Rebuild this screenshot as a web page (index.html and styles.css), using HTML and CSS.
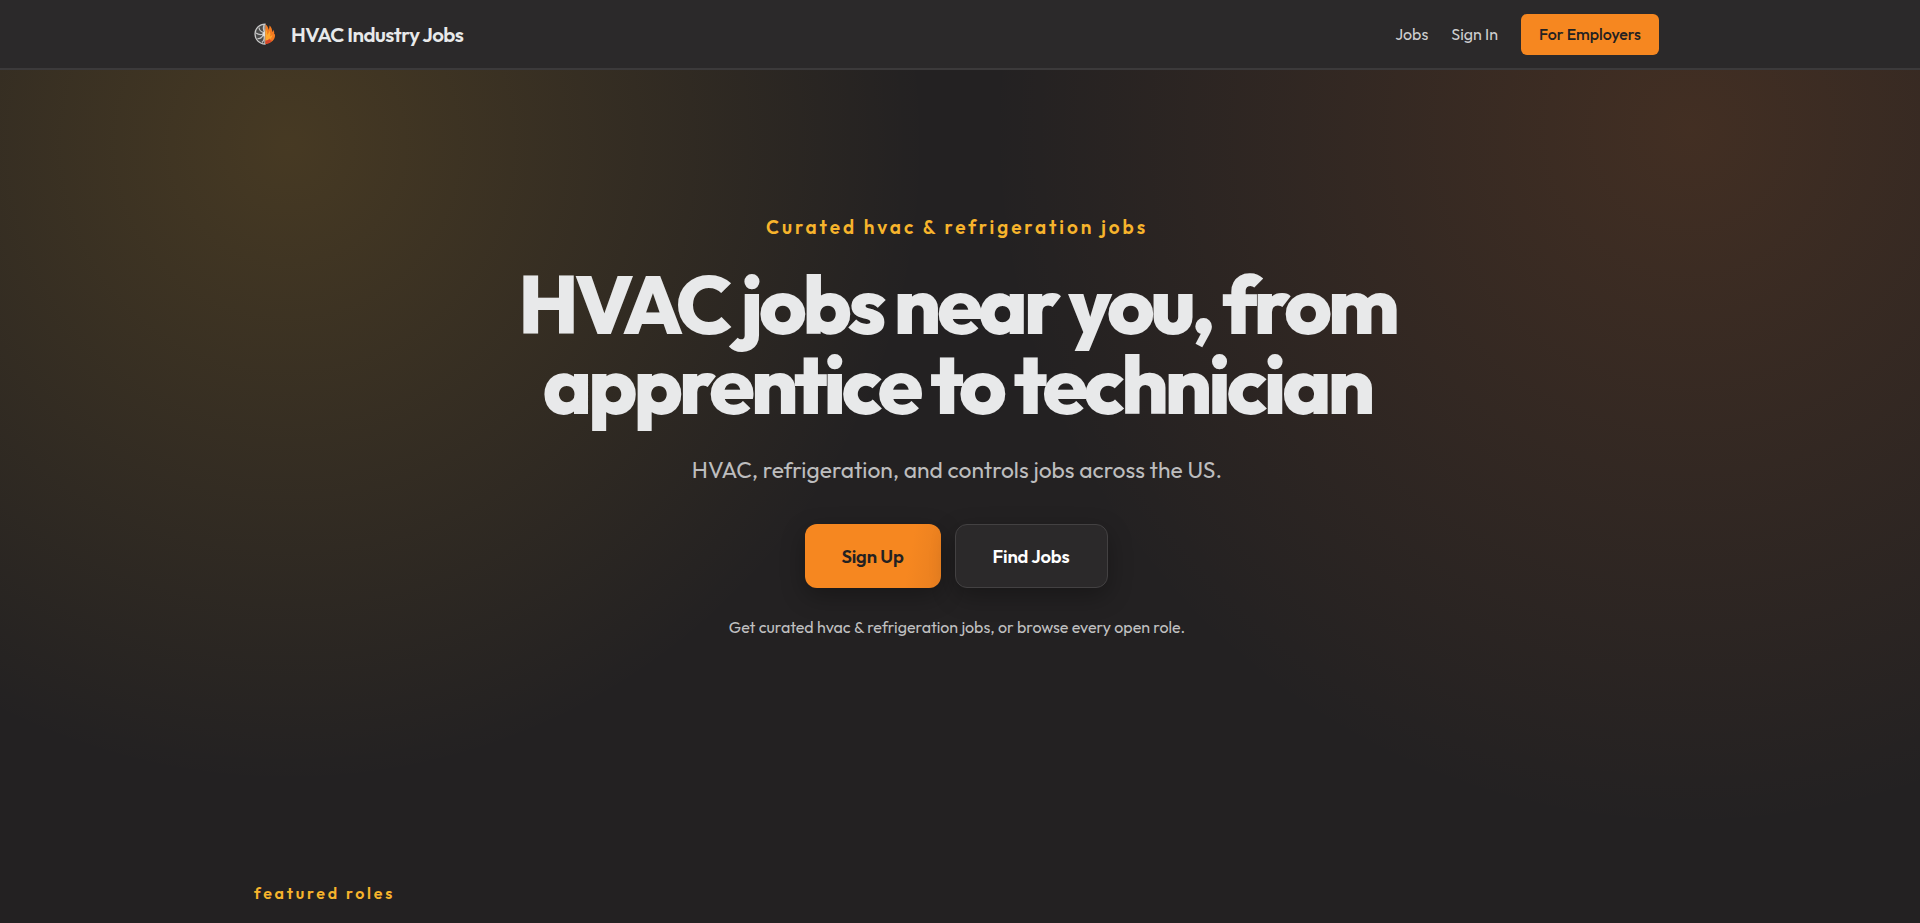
FILE: index.html
```html
<!DOCTYPE html>
<html lang="en">
<head>
    <meta charset="UTF-8">
    <meta name="viewport" content="width=device-width, initial-scale=1.0">
    <title>HVAC Industry Jobs</title>
    <link rel="stylesheet" href="styles.css">
</head>
<body>

<header class="site-header">
    <div class="container header-inner">
        <a class="brand" href="#">
            <svg class="brand-icon" viewBox="0 0 44 44">
                <path d="M22 2a20 20 0 0 0 0 40z" fill="#4a4a4a" stroke="#c9c9c9" stroke-width="2.5"/>
                <path d="M21 18Q17 11 20 4M19 19Q11 17 10 9M18 22Q11 25 4 20M18 24Q15 32 7 31M20 26Q22 33 16 39" fill="none" stroke="#c4c4c4" stroke-width="2.4"/>
                <path d="M22 17a5 5 0 0 0 0 10z" fill="#ddd"/>
                <path d="M23 42V3q6 4 6 11 2-3 2-9 6 5 5 13 2-1 2-5 4 5 2 10 2-1 2-3 1 11-5 16-5 5-14 6z" fill="#f47b20"/>
                <path d="M23 36V11q4 6 3 13 4-3 5-9 3 7 1 12 3-1 5-4-1 10-14 13z" fill="#ffa82e"/>
                <path d="M23 42v-7q5 1 8-4 0 5 5 4-3 5-13 7z" fill="#d8432a"/>
            </svg>
            <span class="brand-name">HVAC Industry Jobs</span>
        </a>
        <nav class="nav">
            <a class="nav-link" href="#">Jobs</a>
            <a class="nav-link nav-signin" href="#">Sign In</a>
            <a class="nav-button" href="#">For Employers</a>
        </nav>
    </div>
</header>

<main>
    <section class="hero">
        <p class="eyebrow hero-eyebrow">Curated hvac &amp; refrigeration jobs</p>
        <h1 class="hero-title">HVAC jobs near you, from apprentice to technician</h1>
        <p class="hero-text">HVAC, refrigeration, and controls jobs across the US.</p>
        <div class="hero-actions">
            <a class="button button-primary" href="#">Sign Up</a>
            <a class="button button-secondary" href="#">Find Jobs</a>
        </div>
        <p class="hero-note">Get curated hvac &amp; refrigeration jobs, or browse every open role.</p>
    </section>

    <section class="container featured">
        <p class="eyebrow featured-eyebrow">featured roles</p>
    </section>
</main>

</body>
</html>
```

FILE: styles.css
```css
* {
    box-sizing: border-box;
}
body {
    margin: 0;
    height: 923px;
    overflow: hidden;
    background:
        radial-gradient(circle at 15% 145px, rgba(245, 178, 40, 0.17), transparent 640px),
        radial-gradient(circle at 88% 130px, rgba(245, 125, 40, 0.15), transparent 700px),
        #232122;
    color: #e8e9ea;
    font-family: Outfit, Lato, sans-serif;
    font-size: 16px;
}
a {
    color: inherit;
    text-decoration: none;
}
p, h1 {
    margin: 0;
}
.container {
    width: 1405px;
    margin-left: 254px;
}
.site-header {
    height: 70px;
    background: #2b292a;
    border-bottom: 2px solid #3c3a3b;
}
.header-inner {
    display: flex;
    justify-content: space-between;
    align-items: center;
    height: 68px;
}
.brand {
    display: flex;
    align-items: center;
    gap: 15px;
}
.brand-icon {
    width: 22px;
    height: 22px;
}
.brand-name {
    font-size: 20.5px;
    font-weight: 600;
    line-height: 28px;
    letter-spacing: -0.55px;
}
.nav {
    display: flex;
    align-items: center;
    color: #cfcfd0;
}
.nav-signin {
    margin: 0 23px;
}
.nav-button {
    width: 138px;
    height: 41px;
    line-height: 41px;
    border-radius: 6px;
    background: #f68720;
    color: #232122;
    text-align: center;
    font-weight: 500;
    letter-spacing: -0.05px;
}
.hero {
    display: flex;
    flex-direction: column;
    align-items: center;
    width: 1914px;
    height: 794px;
    padding-top: 144px;
}
.eyebrow {
    color: #f7b42c;
    font-weight: 600;
}
.hero-eyebrow {
    font-size: 19px;
    line-height: 27px;
    letter-spacing: 2.93px;
}
.hero-title {
    width: 960px;
    margin-top: 23px;
    font-size: 82px;
    font-weight: 800;
    line-height: 80.4px;
    letter-spacing: -4.1px;
    text-align: center;
}
.hero-text {
    margin-top: 28px;
    color: #bdbdbe;
    font-size: 22.8px;
    font-weight: 400;
    line-height: 34px;
}
.hero-actions {
    display: flex;
    gap: 14px;
    margin-top: 37px;
    margin-right: 2px;
}
.button {
    height: 64px;
    line-height: 66px;
    border-radius: 12px;
    box-shadow: 0 8px 24px rgba(0, 0, 0, 0.3);
    text-align: center;
    font-size: 18.4px;
    font-weight: 600;
    letter-spacing: -0.14px;
}
.button-primary {
    width: 136px;
    background: linear-gradient(100deg, #f68720 75%, #e87f20);
    color: #232122;
}
.button-secondary {
    width: 153px;
    border: 1px solid #434142;
    background: #2b292a;
    color: #fff;
    line-height: 64px;
}
.hero-note {
    margin-top: 27px;
    color: #c0c0c1;
    line-height: 24px;
    letter-spacing: -0.02px;
}
.featured-eyebrow {
    margin-top: 17px;
    font-size: 16px;
    line-height: 24px;
    letter-spacing: 2.8px;
}
```
